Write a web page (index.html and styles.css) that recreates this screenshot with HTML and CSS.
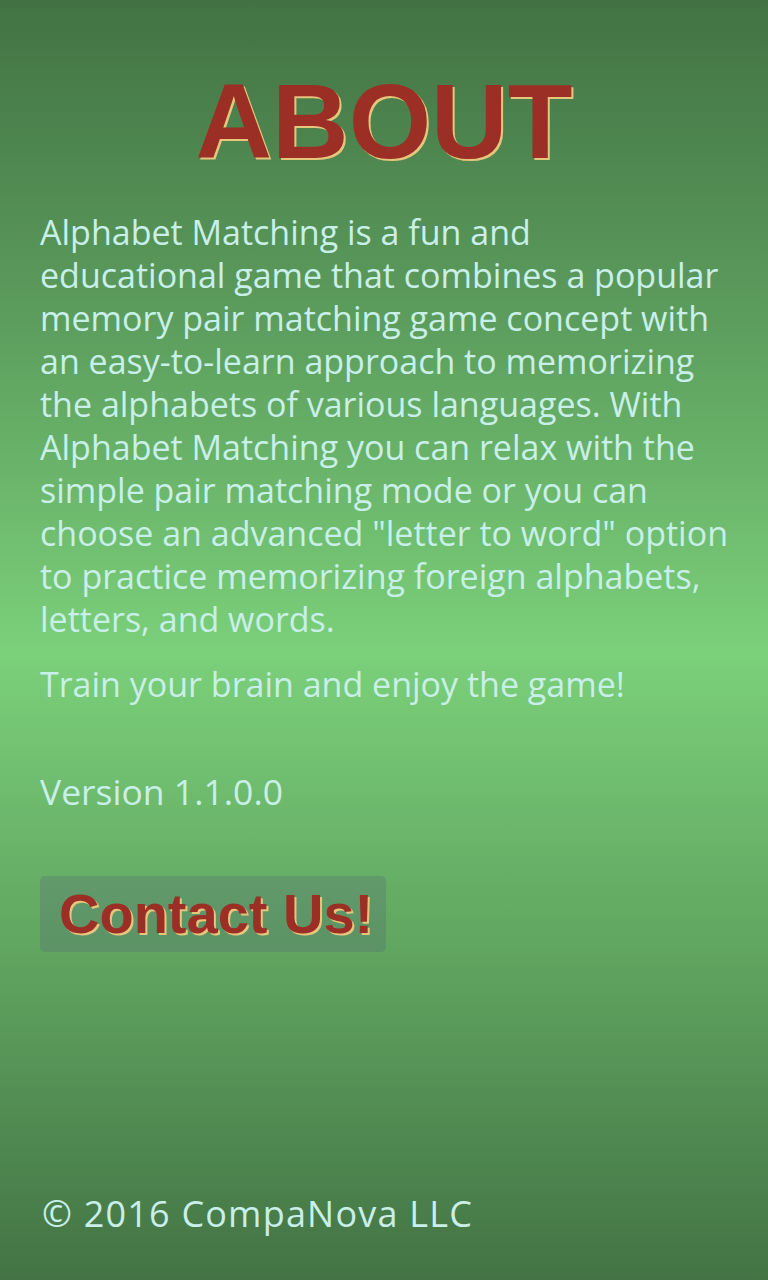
FILE: index.html
```html
<!DOCTYPE html>
<html lang="en">
<head>
<meta charset="utf-8">
<title>About</title>
<link rel="stylesheet" href="styles.css">
</head>
<body>
<main class="page">
  <h1 class="title">ABOUT</h1>
  <p class="text intro">Alphabet Matching is a fun and<br>
educational game that combines a popular<br>
memory pair matching game concept with<br>
an easy-to-learn approach to memorizing<br>
the alphabets of various languages. With<br>
Alphabet Matching you can relax with the<br>
simple pair matching mode or you can<br>
choose an advanced "letter to word" option<br>
to practice memorizing foreign alphabets,<br>
letters, and words.</p>
  <p class="text train">Train your brain and enjoy the game!</p>
  <p class="text version">Version 1.1.0.0</p>
  <div class="actions"><button class="contact" type="button">Contact Us!</button></div>
  <footer class="text copyright">© 2016 CompaNova LLC</footer>
</main>
</body>
</html>
```
FILE: styles.css
```css
html, body {
  margin: 0;
  padding: 0;
}
body {
  background: linear-gradient(to bottom, #427243 0%, #5c9d5d 25%, #7bd07a 51%, #5fa35f 75%, #437344 100%);
  min-height: 1280px;
}
.page {
  box-sizing: border-box;
  min-height: 1280px;
  display: flex;
  flex-direction: column;
  padding: 68px 20px 44px 40px;
}
.title {
  margin: 0 -20px 0 -40px;
  font-family: "Liberation Sans", Arial, sans-serif;
  font-weight: bold;
  font-size: 106px;
  line-height: 1;
  text-align: center;
  color: #9b2f25;
  text-shadow: 2px 2px 0 #e6c57c;
}
.text {
  margin: 0;
  font-family: "Open Sans", "Noto Sans", sans-serif;
  font-size: 34px;
  line-height: 43px;
  color: #c9efe9;
  white-space: nowrap;
}
.intro {
  margin-top: 37px;
}
.train {
  margin-top: 22px;
}
.version {
  margin-top: 64px;
  font-size: 35.5px;
}
.actions {
  margin-top: 63px;
  display: flex;
}
.contact {
  box-sizing: border-box;
  height: 76px;
  width: 346px;
  padding: 0 10px 2px 19px;
  border: none;
  border-radius: 5px;
  background: rgba(85, 105, 115, 0.3);
  font-family: "Liberation Sans", Arial, sans-serif;
  font-weight: bold;
  font-size: 56px;
  line-height: 73px;
  text-align: left;
  white-space: nowrap;
  color: #9b2f25;
  text-shadow: 2px 2px 0 #e6c57c;
}
.copyright {
  margin-top: auto;
  padding-left: 2px;
  font-size: 36px;
  letter-spacing: 1.2px;
  line-height: 44px;
}
```
